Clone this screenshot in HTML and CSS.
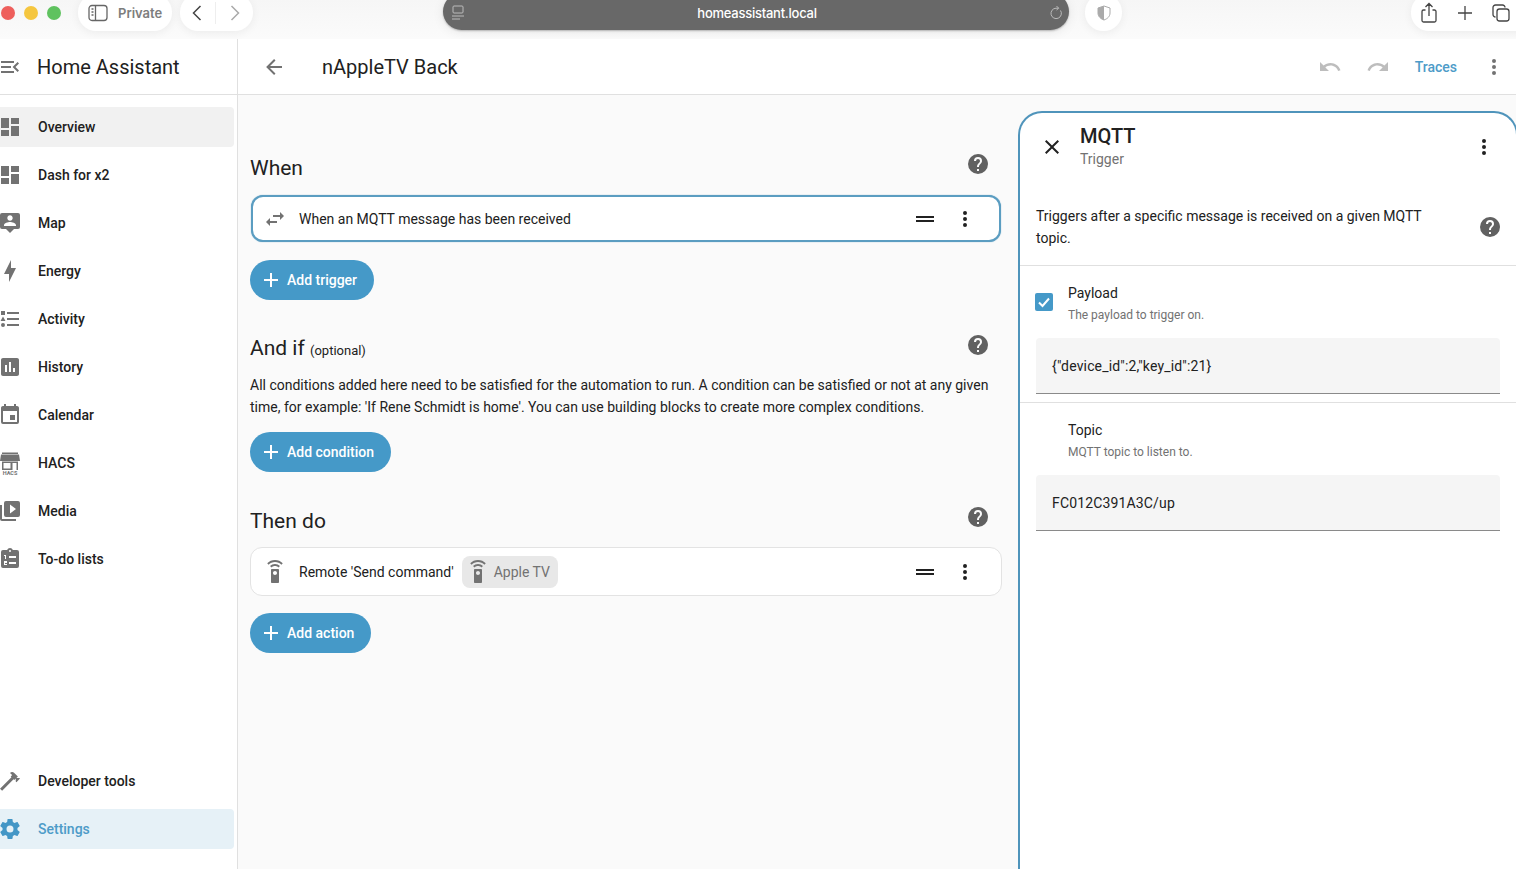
FILE: index.html
```html
<!DOCTYPE html>
<html lang="en">
<head>
<meta charset="utf-8">
<title>nAppleTV Back</title>
<link rel="stylesheet" href="styles.css">
</head>
<body>
<header class="browser">
  <div class="lights"><span class="light red"></span><span class="light yellow"></span><span class="light green"></span></div>
  <div class="pill private">
    <svg class="b-ico" viewBox="0 0 20 18"><rect x="1" y="1.5" width="18" height="15" rx="3"/><path d="M7.5 1.5v15M3.5 5h2M3.5 8h2M3.5 11h2"/></svg>
    <span>Private</span>
  </div>
  <div class="pill nav">
    <svg class="chev" viewBox="0 0 12 18"><path d="M9.5 2 2.5 9l7 7"/></svg>
    <i class="nav-sep"></i>
    <svg class="chev off" viewBox="0 0 12 18"><path d="M2.5 2l7 7-7 7"/></svg>
  </div>
  <div class="url">
    <svg class="reader" viewBox="0 0 14 16"><rect x="2" y="1" width="10" height="7" rx="1"/><path d="M1 11h12M1 14h8"/></svg>
    <span class="url-text">homeassistant.local</span>
    <svg class="reload" viewBox="0 0 14 16"><path d="M11.5 5.5A5.2 5.2 0 1 1 7 3.2h2.5M7.5 1l2.2 2.2L7.5 5"/></svg>
  </div>
  <div class="pill shield">
    <svg viewBox="0 0 14 16"><path class="sh-o" d="M7 1l6 2v5c0 3.5-2.6 5.8-6 7-3.400-1.200-6-3.500-6-7V3z"/><path class="sh-f" d="M7 1v14c-3.400-1.200-6-3.500-6-7V3z"/></svg>
  </div>
  <div class="pill actions">
    <svg class="act" viewBox="0 0 18 22"><path d="M5.500 8H3.500A1.500 1.500 0 0 0 2 9.500v9A1.500 1.500 0 0 0 3.500 20h11a1.500 1.500 0 0 0 1.500-1.500v-9A1.500 1.500 0 0 0 14.500 8h-2M9 14V2M5.500 5 9 1.500 12.500 5"/></svg>
    <svg class="act" viewBox="0 0 18 22"><path d="M9 4v14M2 11h14"/></svg>
    <svg class="act" viewBox="0 0 18 18"><rect x="5" y="5" width="12" height="12" rx="2.500"/><path d="M3.500 13A2.500 2.500 0 0 1 1 10.500v-7A2.500 2.500 0 0 1 3.500 1h7A2.500 2.500 0 0 1 13 3.500"/></svg>
  </div>
</header>

<div class="app">
  <aside class="sidebar">
    <div class="side-head">
      <svg class="ico" viewBox="0 0 24 24"><path d="M21,15.61L19.59,17L14.58,12L19.59,7L21,8.39L17.44,12L21,15.61M3,6H16V8H3V6M3,13V11H13V13H3M3,18V16H16V18H3Z"/></svg>
      <span class="side-title">Home Assistant</span>
    </div>
    <nav class="side-nav">
      <a class="item active"><svg class="ico" viewBox="0 0 24 24"><path d="M13,3V9H21V3M13,21H21V11H13M3,21H11V15H3M3,13H11V3H3V13Z"/></svg><span>Overview</span></a>
      <a class="item"><svg class="ico" viewBox="0 0 24 24"><path d="M13,3V9H21V3M13,21H21V11H13M3,21H11V15H3M3,13H11V3H3V13Z"/></svg><span>Dash for x2</span></a>
      <a class="item"><svg class="ico" viewBox="0 0 24 24"><path d="M20,2H4A2,2 0 0,0 2,4V16A2,2 0 0,0 4,18H8L12,22L16,18H20A2,2 0 0,0 22,16V4A2,2 0 0,0 20,2M12,4.3C13.5,4.3 14.7,5.5 14.7,7C14.7,8.5 13.5,9.7 12,9.7C10.5,9.7 9.3,8.5 9.3,7C9.3,5.5 10.5,4.3 12,4.3M18,15H6V14.1C6,12.1 10,11 12,11C14,11 18,12.1 18,14.1V15Z"/></svg><span>Map</span></a>
      <a class="item"><svg class="ico" viewBox="0 0 24 24"><path d="M11 15H6L13 1V9H18L11 23V15Z"/></svg><span>Energy</span></a>
      <a class="item"><svg class="ico" viewBox="0 0 24 24"><path d="M5,9.5L7.5,14H2.5L5,9.5M3,4H7V8H3V4M5,20A2,2 0 0,0 7,18A2,2 0 0,0 5,16A2,2 0 0,0 3,18A2,2 0 0,0 5,20M9,5V7H21V5H9M9,19H21V17H9V19M9,13H21V11H9V13Z"/></svg><span>Activity</span></a>
      <a class="item"><svg class="ico" viewBox="0 0 24 24"><path d="M19 3H5C3.900 3 3 3.900 3 5V19C3 20.100 3.900 21 5 21H19C20.100 21 21 20.100 21 19V5C21 3.900 20.100 3 19 3M9 17H7V10H9V17M13 17H11V7H13V17M17 17H15V13H17V17Z"/></svg><span>History</span></a>
      <a class="item"><svg class="ico" viewBox="0 0 24 24"><path d="M19,19H5V8H19M16,1V3H8V1H6V3H5C3.890,3 3,3.890 3,5V19A2,2 0 0,0 5,21H19A2,2 0 0,0 21,19V5C21,3.890 20.100,3 19,3H18V1M17,12H12V17H17V12Z"/></svg><span>Calendar</span></a>
      <a class="item"><svg class="ico" viewBox="0 0 24 24"><path d="M4 1.500H20V3H4ZM3 3.500H21L22 10H2ZM4 10.500H20V19H4ZM5.500 12V17.500H12.500V12ZM14.500 12V19H18.500V12Z" fill-rule="evenodd"/><text class="hacs-t" x="12" y="24">HACS</text></svg><span>HACS</span></a>
      <a class="item"><svg class="ico" viewBox="0 0 24 24"><path d="M4,6H2V20A2,2 0 0,0 4,22H18V20H4M12,14.500V5.500L18,10M20,2H8A2,2 0 0,0 6,4V16A2,2 0 0,0 8,18H20A2,2 0 0,0 22,16V4A2,2 0 0,0 20,2Z"/></svg><span>Media</span></a>
      <a class="item"><svg class="ico" viewBox="0 0 24 24"><path fill-rule="evenodd" d="M19,3H14.820C14.400,1.840 13.300,1 12,1C10.700,1 9.600,1.840 9.180,3H5A2,2 0 0,0 3,5V19A2,2 0 0,0 5,21H19A2,2 0 0,0 21,19V5A2,2 0 0,0 19,3ZM12,3A1,1 0 0,1 13,4A1,1 0 0,1 12,5A1,1 0 0,1 11,4A1,1 0 0,1 12,3ZM11,9H18V11H11ZM11,15H18V17H11ZM6,8H8V12H7V9H6ZM6,14H9V16H7V17H9V18H6V15H8V15H6Z"/></svg><span>To-do lists</span></a>
      <div class="side-spacer"></div>
      <a class="item"><svg class="ico" viewBox="0 0 24 24"><path d="M2 19.630L13.430 8.200L12.720 7.500L14.140 6.070L12 3.890C13.200 2.700 15.090 2.700 16.270 3.890L19.870 7.500L18.450 8.910H21.290L22 9.620L18.450 13.210L17.740 12.500V9.620L16.270 11.040L15.560 10.330L4.130 21.760L2 19.630Z"/></svg><span>Developer tools</span></a>
      <a class="item selected"><svg class="ico" viewBox="0 0 24 24"><path d="M12,15.500A3.500,3.500 0 0,1 8.500,12A3.500,3.500 0 0,1 12,8.500A3.500,3.500 0 0,1 15.500,12A3.500,3.500 0 0,1 12,15.500M19.430,12.970C19.470,12.650 19.500,12.330 19.500,12C19.500,11.670 19.470,11.340 19.430,11L21.540,9.370C21.730,9.220 21.780,8.950 21.660,8.730L19.660,5.270C19.540,5.050 19.270,4.960 19.050,5.050L16.560,6.050C16.040,5.660 15.500,5.320 14.870,5.070L14.500,2.420C14.460,2.180 14.250,2 14,2H10C9.750,2 9.540,2.180 9.500,2.420L9.130,5.070C8.500,5.320 7.960,5.660 7.440,6.050L4.950,5.050C4.730,4.960 4.460,5.050 4.340,5.270L2.340,8.730C2.210,8.950 2.270,9.220 2.460,9.370L4.570,11C4.530,11.340 4.500,11.670 4.500,12C4.500,12.330 4.530,12.650 4.570,12.970L2.460,14.630C2.270,14.780 2.210,15.050 2.340,15.270L4.340,18.730C4.460,18.950 4.730,19.030 4.950,18.950L7.440,17.940C7.960,18.340 8.500,18.680 9.130,18.930L9.500,21.580C9.540,21.820 9.750,22 10,22H14C14.250,22 14.460,21.820 14.500,21.580L14.870,18.930C15.500,18.670 16.040,18.340 16.560,17.940L19.050,18.950C19.270,19.030 19.540,18.950 19.660,18.730L21.660,15.270C21.780,15.050 21.730,14.780 21.540,14.630L19.430,12.970Z"/></svg><span>Settings</span></a>
    </nav>
  </aside>

  <main class="main">
    <div class="top">
      <svg class="ico back" viewBox="0 0 24 24"><path d="M20,11V13H8L13.500,18.500L12.080,19.920L4.160,12L12.080,4.080L13.500,5.500L8,11H20Z"/></svg>
      <h1 class="page-title">nAppleTV Back</h1>
      <div class="top-actions">
        <svg class="ico dim" viewBox="0 0 24 24"><path d="M12.500,8C9.850,8 7.450,9 5.600,10.600L2,7V16H11L7.380,12.380C8.770,11.220 10.540,10.500 12.500,10.500C16.040,10.500 19.050,12.810 20.100,16L22.470,15.220C21.080,11.030 17.150,8 12.500,8Z"/></svg>
        <svg class="ico dim" viewBox="0 0 24 24"><path d="M18.400,10.600C16.550,9 14.150,8 11.500,8C6.850,8 2.920,11.030 1.530,15.220L3.900,16C4.950,12.810 7.950,10.500 11.500,10.500C13.450,10.500 15.230,11.220 16.620,12.380L13,16H22V7L18.400,10.600Z"/></svg>
        <span class="traces">Traces</span>
        <svg class="ico" viewBox="0 0 24 24"><path d="M12,16A2,2 0 0,1 14,18A2,2 0 0,1 12,20A2,2 0 0,1 10,18A2,2 0 0,1 12,16M12,10A2,2 0 0,1 14,12A2,2 0 0,1 12,14A2,2 0 0,1 10,12A2,2 0 0,1 12,10M12,4A2,2 0 0,1 14,6A2,2 0 0,1 12,8A2,2 0 0,1 10,6A2,2 0 0,1 12,4Z"/></svg>
      </div>
    </div>

    <div class="content">
      <section class="editor">
        <div class="sec-head when-head">
          <h2 class="sec-title">When</h2>
          <svg class="ico help" viewBox="0 0 24 24"><path d="M15.070,11.250L14.170,12.170C13.450,12.890 13,13.500 13,15H11V14.500C11,13.390 11.450,12.390 12.170,11.670L13.410,10.410C13.780,10.050 14,9.550 14,9C14,7.890 13.100,7 12,7A2,2 0 0,0 10,9H8A4,4 0 0,1 12,5A4,4 0 0,1 16,9C16,9.880 15.640,10.670 15.070,11.250M13,19H11V17H13M12,2A10,10 0 0,0 2,12A10,10 0 0,0 12,22A10,10 0 0,0 22,12C22,6.470 17.500,2 12,2Z"/></svg>
        </div>
        <div class="row-card focus">
          <svg class="ico" viewBox="0 0 24 24"><path d="M21,9L17,5V8H10V10H17V13M7,11L3,15L7,19V16H14V14H7V11Z"/></svg>
          <span class="row-text">When an MQTT message has been received</span>
          <svg class="ico dark drag" viewBox="0 0 24 24"><path d="M21 11H3V9H21V11M21 13H3V15H21V13Z"/></svg>
          <svg class="ico dark more" viewBox="0 0 24 24"><path d="M12,16A2,2 0 0,1 14,18A2,2 0 0,1 12,20A2,2 0 0,1 10,18A2,2 0 0,1 12,16M12,10A2,2 0 0,1 14,12A2,2 0 0,1 12,14A2,2 0 0,1 10,12A2,2 0 0,1 12,10M12,4A2,2 0 0,1 14,6A2,2 0 0,1 12,8A2,2 0 0,1 10,6A2,2 0 0,1 12,4Z"/></svg>
        </div>
        <button class="add"><svg class="ico" viewBox="0 0 24 24"><path d="M19,13H13V19H11V13H5V11H11V5H13V11H19V13Z"/></svg>Add trigger</button>

        <div class="sec-head if-head">
          <h2 class="sec-title">And if <small class="opt">(optional)</small></h2>
          <svg class="ico help" viewBox="0 0 24 24"><path d="M15.070,11.250L14.170,12.170C13.450,12.890 13,13.500 13,15H11V14.500C11,13.390 11.450,12.390 12.170,11.670L13.410,10.410C13.780,10.050 14,9.550 14,9C14,7.890 13.100,7 12,7A2,2 0 0,0 10,9H8A4,4 0 0,1 12,5A4,4 0 0,1 16,9C16,9.880 15.640,10.670 15.070,11.250M13,19H11V17H13M12,2A10,10 0 0,0 2,12A10,10 0 0,0 12,22A10,10 0 0,0 22,12C22,6.470 17.500,2 12,2Z"/></svg>
        </div>
        <p class="desc">All conditions added here need to be satisfied for the automation to run. A condition can be satisfied or not at any given time, for example: 'If Rene Schmidt is home'. You can use building blocks to create more complex conditions.</p>
        <button class="add"><svg class="ico" viewBox="0 0 24 24"><path d="M19,13H13V19H11V13H5V11H11V5H13V11H19V13Z"/></svg>Add condition</button>

        <div class="sec-head then-head">
          <h2 class="sec-title">Then do</h2>
          <svg class="ico help" viewBox="0 0 24 24"><path d="M15.070,11.250L14.170,12.170C13.450,12.890 13,13.500 13,15H11V14.500C11,13.390 11.450,12.390 12.170,11.670L13.410,10.410C13.780,10.050 14,9.550 14,9C14,7.890 13.100,7 12,7A2,2 0 0,0 10,9H8A4,4 0 0,1 12,5A4,4 0 0,1 16,9C16,9.880 15.640,10.670 15.070,11.250M13,19H11V17H13M12,2A10,10 0 0,0 2,12A10,10 0 0,0 12,22A10,10 0 0,0 22,12C22,6.470 17.500,2 12,2Z"/></svg>
        </div>
        <div class="row-card plain">
          <svg class="ico" viewBox="0 0 24 24"><path fill-rule="evenodd" d="M12,0C8.960,0 6.210,1.230 4.220,3.220L5.630,4.630C7.260,3 9.500,2 12,2C14.500,2 16.740,3 18.360,4.640L19.770,3.230C17.790,1.230 15.040,0 12,0M7.050,6.050L8.460,7.460C9.370,6.560 10.620,6 12,6C13.380,6 14.630,6.560 15.540,7.460L16.950,6.050C15.680,4.780 13.930,4 12,4C10.070,4 8.320,4.780 7.050,6.050M15,9H9C8.450,9 8,9.450 8,10V22C8,22.550 8.450,23 9,23H15C15.550,23 16,22.550 16,22V10C16,9.450 15.550,9 15,9M12,15C10.890,15 10,14.100 10,13C10,11.890 10.890,11 12,11C13.110,11 14,11.890 14,13C14,14.100 13.100,15 12,15Z"/></svg>
          <span class="row-text">Remote 'Send command'</span>
          <span class="chip">
            <svg class="ico" viewBox="0 0 24 24"><path fill-rule="evenodd" d="M12,0C8.960,0 6.210,1.230 4.220,3.220L5.630,4.630C7.260,3 9.500,2 12,2C14.500,2 16.740,3 18.360,4.640L19.770,3.230C17.790,1.230 15.040,0 12,0M7.050,6.050L8.460,7.460C9.370,6.560 10.620,6 12,6C13.380,6 14.630,6.560 15.540,7.460L16.950,6.050C15.680,4.780 13.930,4 12,4C10.070,4 8.320,4.780 7.050,6.050M15,9H9C8.450,9 8,9.450 8,10V22C8,22.550 8.450,23 9,23H15C15.550,23 16,22.550 16,22V10C16,9.450 15.550,9 15,9M12,15C10.890,15 10,14.100 10,13C10,11.890 10.890,11 12,11C13.110,11 14,11.890 14,13C14,14.100 13.100,15 12,15Z"/></svg>
            Apple TV
          </span>
          <svg class="ico dark drag" viewBox="0 0 24 24"><path d="M21 11H3V9H21V11M21 13H3V15H21V13Z"/></svg>
          <svg class="ico dark more" viewBox="0 0 24 24"><path d="M12,16A2,2 0 0,1 14,18A2,2 0 0,1 12,20A2,2 0 0,1 10,18A2,2 0 0,1 12,16M12,10A2,2 0 0,1 14,12A2,2 0 0,1 12,14A2,2 0 0,1 10,12A2,2 0 0,1 12,10M12,4A2,2 0 0,1 14,6A2,2 0 0,1 12,8A2,2 0 0,1 10,6A2,2 0 0,1 12,4Z"/></svg>
        </div>
        <button class="add add-last"><svg class="ico" viewBox="0 0 24 24"><path d="M19,13H13V19H11V13H5V11H11V5H13V11H19V13Z"/></svg>Add action</button>
      </section>

      <aside class="panel">
        <div class="panel-head">
          <svg class="ico dark" viewBox="0 0 24 24"><path d="M19,6.410L17.590,5L12,10.590L6.410,5L5,6.410L10.590,12L5,17.590L6.410,19L12,13.410L17.590,19L19,17.590L13.410,12L19,6.410Z"/></svg>
          <div class="panel-titles">
            <div class="panel-title">MQTT</div>
            <div class="panel-sub">Trigger</div>
          </div>
          <svg class="ico dark panel-more" viewBox="0 0 24 24"><path d="M12,16A2,2 0 0,1 14,18A2,2 0 0,1 12,20A2,2 0 0,1 10,18A2,2 0 0,1 12,16M12,10A2,2 0 0,1 14,12A2,2 0 0,1 12,14A2,2 0 0,1 10,12A2,2 0 0,1 12,10M12,4A2,2 0 0,1 14,6A2,2 0 0,1 12,8A2,2 0 0,1 10,6A2,2 0 0,1 12,4Z"/></svg>
        </div>
        <div class="panel-desc">
          <p>Triggers after a specific message is received on a given MQTT topic.</p>
          <svg class="ico help" viewBox="0 0 24 24"><path d="M15.070,11.250L14.170,12.170C13.450,12.890 13,13.500 13,15H11V14.500C11,13.390 11.450,12.390 12.170,11.670L13.410,10.410C13.780,10.050 14,9.550 14,9C14,7.890 13.100,7 12,7A2,2 0 0,0 10,9H8A4,4 0 0,1 12,5A4,4 0 0,1 16,9C16,9.880 15.640,10.670 15.070,11.250M13,19H11V17H13M12,2A10,10 0 0,0 2,12A10,10 0 0,0 12,22A10,10 0 0,0 22,12C22,6.470 17.500,2 12,2Z"/></svg>
        </div>
        <div class="field">
          <div class="field-label">
            <span class="check"><svg viewBox="0 0 18 18"><path d="M4 9.500l3.500 3.500 6.500-7.500"/></svg></span>
            <div><div class="f-name">Payload</div><div class="f-help">The payload to trigger on.</div></div>
          </div>
          <div class="input">{"device_id":2,"key_id":21}</div>
        </div>
        <div class="field">
          <div class="field-label">
            <span class="check none"></span>
            <div><div class="f-name">Topic</div><div class="f-help">MQTT topic to listen to.</div></div>
          </div>
          <div class="input">FC012C391A3C/up</div>
        </div>
      </aside>
    </div>
  </main>
</div>
</body>
</html>
```

FILE: styles.css
```css
* { box-sizing: border-box; }
html, body { margin: 0; height: 100%; overflow: hidden; }
body { width: 1516px; height: 869px; font-family: Roboto, "Liberation Sans", sans-serif; color: #212121; background: #fff; display: flex; flex-direction: column; }

/* browser chrome */
.browser { height: 39px; flex: none; display: flex; align-items: flex-start; background: linear-gradient(#f6f6f6, #fbfbfb); overflow: hidden; font-family: Inter, "Liberation Sans", sans-serif; }
.browser > * { flex: none; }
.lights { display: flex; gap: 9px; margin: 6px 16px 0 1px; width: 61px; }
.light { width: 14px; height: 14px; border-radius: 50%; flex: none; }
.red { background: #ee5f5c; }
.yellow { background: #f5c63f; }
.green { background: #5fc25f; }
.pill { height: 37px; margin-top: -6px; background: #fff; border-radius: 18px; display: flex; align-items: center; box-shadow: 0 2px 10px rgba(0, 0, 0, .06); padding-top: 1px; }
.private { width: 94px; padding-left: 10px; gap: 10px; font-size: 13px; font-weight: 600; color: #7d7d7d; }
.b-ico { width: 20px; height: 18px; fill: none; stroke: #666; stroke-width: 1.3; }
.nav { width: 73px; margin-left: 8px; justify-content: space-around; padding-left: 5px; padding-right: 6px; }
.chev { width: 12px; height: 18px; fill: none; stroke: #444; stroke-width: 1.500; }
.chev.off { stroke: #aaa; }
.nav-sep { width: 1px; height: 22px; background: #eee; }
.url { width: 626px; height: 37px; margin: -7px 0 0 190px; padding-top: 3px; background: #686868; border-radius: 19px; display: flex; align-items: center; justify-content: space-between; padding-left: 8px; padding-right: 6px; box-shadow: 0 1px 2px rgba(0, 0, 0, .25), 0 2px 12px rgba(0, 0, 0, .08); color: #fff; font-size: 13px; }
.url-text { letter-spacing: -.25px; font-weight: 500; }
.reader { width: 14px; height: 16px; fill: none; stroke: #bbb; stroke-width: 1; }
.reload { width: 14px; height: 16px; fill: none; stroke: #bbb; stroke-width: 1; }
.shield { width: 37px; margin-left: 16px; justify-content: center; }
.shield svg { width: 14px; height: 16px; }
.sh-o { fill: none; stroke: #aaa; stroke-width: 1; }
.sh-f { fill: #aaa; }
.actions { width: 120px; margin-left: 289px; padding-left: 9px; gap: 18px; border-radius: 18px 0 0 18px; }
.act { width: 18px; height: 22px; fill: none; stroke: #444; stroke-width: 1.300; flex: none; }

/* layout */
.app { flex: 1; min-height: 0; display: flex; }
.ico { width: 24px; height: 24px; flex: none; fill: #727272; }
.ico.dark { fill: #212121; }
.ico.dim { fill: #bdbdbd; }

.sidebar { width: 238px; flex: none; border-right: 1px solid #e0e0e0; background: #fff; display: flex; flex-direction: column; }
.side-head { height: 56px; flex: none; border-bottom: 1px solid #e0e0e0; display: flex; align-items: center; }
.side-head .ico { margin-left: -2px; }
.side-title { margin-left: 15px; font-size: 20px; }
.side-nav { flex: 1; display: flex; flex-direction: column; gap: 8px; padding: 12px 0 20px; }
.side-spacer { flex: 1; }
.item { width: 234px; height: 40px; flex: none; display: flex; align-items: center; gap: 16px; border-radius: 0 4px 4px 0; font-size: 14px; font-weight: 500; }
.item .ico { margin-left: -2px; }
.item.active { background: #f1f1f1; }
.item.selected { background: #e6f1f7; color: #4d9bc8; }
.item.selected .ico { fill: #4396c6; }
.hacs-t { font-family: Roboto, sans-serif; font-size: 5.500px; font-weight: 700; text-anchor: middle; }

.main { flex: 1; min-width: 0; display: flex; flex-direction: column; background: #fafafa; }
.top { height: 56px; flex: none; background: #fff; border-bottom: 1px solid #e0e0e0; display: flex; align-items: center; padding: 0 10px 0 24px; }
.page-title { margin: 0 0 0 36px; font-size: 20px; font-weight: 400; }
.top-actions { margin-left: auto; display: flex; align-items: center; }
.top-actions .ico:nth-child(2) { margin-left: 24px; }
.traces { margin: 0 25px 0 25px; font-size: 14px; font-weight: 500; color: #4d9bc8; }

.content { flex: 1; min-height: 0; display: flex; padding: 16px 0 0 12px; gap: 16px; }
.editor { width: 752px; flex: none; }
.sec-head { display: flex; justify-content: space-between; align-items: center; padding-right: 12px; height: 32px; }
.when-head { margin-top: 41px; }
.if-head { margin-top: 33px; }
.then-head { margin-top: 29px; }
.when-head .help, .if-head .help { margin-bottom: 8px; }
.if-head .sec-title { margin-bottom: 2px; }
.then-head .sec-title { margin-top: 8px; }
.sec-title { margin: 0; font-size: 21px; font-weight: 400; }
.opt { font-size: 13px; }
.help { fill: #616161; }
.row-card { display: flex; align-items: center; background: #fff; border-radius: 12px; margin-top: 11px; padding-left: 12px; font-size: 14px; }
.row-card.focus { height: 47px; margin-left: 1px; margin-right: 1px; border: 2px solid #5b9dc1; padding-left: 10px; padding-right: 22px; box-shadow: 0 0 1px #5b9dc1; }
.row-card.plain { height: 49px; border: 1px solid #e3e3e3; padding-right: 24px; margin-top: 14px; }
.row-text { margin-left: 12px; }
.drag { margin-left: auto; }
.more { margin-left: 16px; }
.chip { margin-left: 8px; height: 32px; padding: 0 8px 0 4px; display: flex; align-items: center; gap: 4px; background: #e8e8e8; border-radius: 8px; font-size: 14px; color: #727272; }
.add { display: flex; align-items: center; gap: 4px; height: 40px; margin-top: 18px; padding: 0 17px 0 9px; border: 0; border-radius: 20px; background: #4599c8; color: #fff; font: 500 14px Roboto, sans-serif; }
.add .ico { fill: #fff; }
.add-last { margin-top: 17px; }
.desc { margin: 9px 12px 0 0; font-size: 14px; line-height: 22px; }
.desc + .add { margin-top: 14px; }

.panel { width: 500px; flex: none; background: #fff; border: 2px solid #4f94bb; border-bottom: 0; border-radius: 24px 24px 0 0; }
.panel-head { height: 68px; display: flex; align-items: flex-start; padding: 0 20px 0 20px; }
.panel-head > .ico { margin-top: 22px; }
.panel-titles { margin-left: 16px; margin-top: 11px; }
.panel-title { font-size: 20px; font-weight: 500; line-height: 24px; }
.panel-sub { font-size: 14px; line-height: 22px; color: #727272; }
.panel-more { margin-left: auto; }
.panel-desc { height: 85px; border-bottom: 1px solid #e0e0e0; display: flex; align-items: center; padding: 0 14px 0 16px; font-size: 14px; line-height: 22px; }
.panel-desc p { margin: 8px 0 0; width: 400px; }
.panel-desc .help { margin-left: auto; margin-top: 8px; }
.field { height: 137px; padding: 16px 16px 0; border-bottom: 1px solid #e0e0e0; }
.field + .field { border-bottom: 0; }
.field-label { display: flex; align-items: flex-start; gap: 15px; }
.check { width: 18px; height: 18px; margin: 11px 0 0 -1px; background: #4599c8; border-radius: 2px; flex: none; }
.check.none { background: none; }
.check svg { display: block; fill: none; stroke: #fff; stroke-width: 2; }
.f-name { font-size: 14px; line-height: 22px; }
.f-help { font-size: 12px; line-height: 22px; color: #727272; }
.input { height: 56px; margin-top: 12px; padding: 0 16px; display: flex; align-items: center; background: #f5f5f5; border-bottom: 1px solid #8a8a8a; border-radius: 4px 4px 0 0; font-size: 14px; letter-spacing: .15px; }
```
